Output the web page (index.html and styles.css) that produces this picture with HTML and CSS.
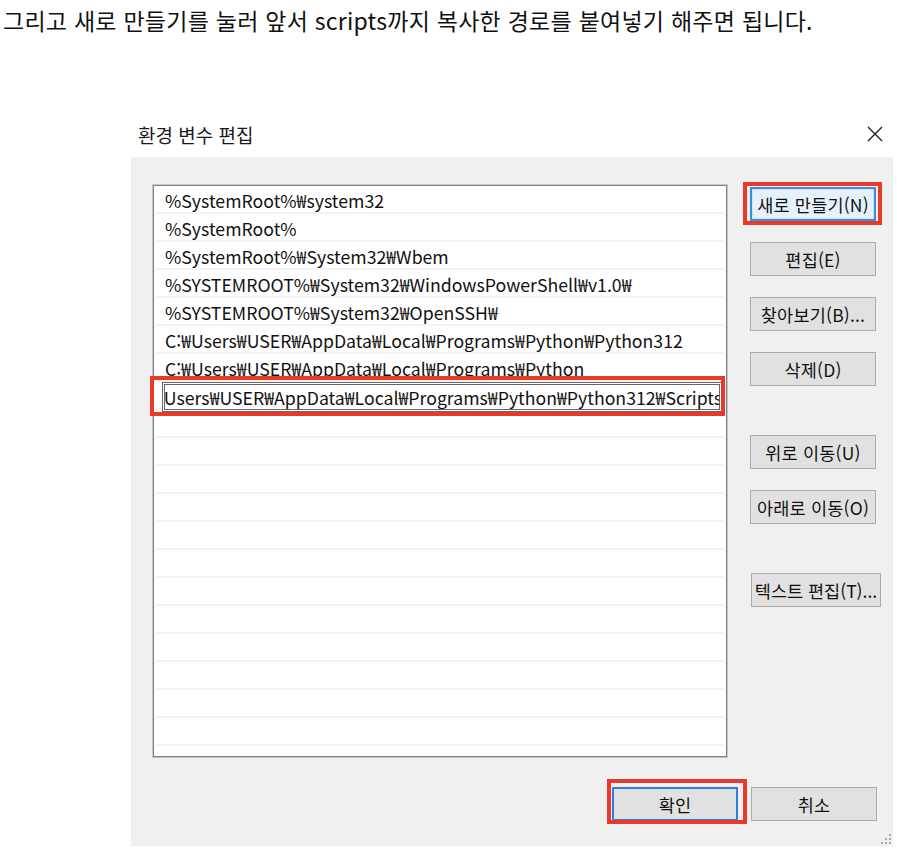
FILE: index.html
```html
<!DOCTYPE html>
<html lang="ko">
<head>
    <meta charset="UTF-8">
    <meta name="viewport" content="width=device-width, initial-scale=1.0">
    <title>환경 변수 편집</title>
    <link rel="stylesheet" href="styles.css">
</head>
<body>
<p class="intro">그리고 새로 만들기를 눌러 앞서 scripts까지 복사한 경로를 붙여넣기 해주면 됩니다.</p>

<div class="dialog">
    <div class="titlebar">
        <span class="title">환경 변수 편집</span>
        <span class="close">
            <svg width="16" height="16" viewBox="0 0 16 16">
                <path d="M1 1 L15 15 M15 1 L1 15" stroke="#1e1e1e" stroke-width="1.4" fill="none"/>
            </svg>
        </span>
    </div>

    <div class="dialog-body">
        <div class="main">
            <ul class="path-list">
                <li>%SystemRoot%₩system32</li>
                <li>%SystemRoot%</li>
                <li>%SystemRoot%₩System32₩Wbem</li>
                <li>%SYSTEMROOT%₩System32₩WindowsPowerShell₩v1.0₩</li>
                <li>%SYSTEMROOT%₩System32₩OpenSSH₩</li>
                <li>C:₩Users₩USER₩AppData₩Local₩Programs₩Python₩Python312</li>
                <li>C:₩Users₩USER₩AppData₩Local₩Programs₩Python</li>
                <li class="editing">
                    <div class="edit"><span class="edit-text">₩Users₩USER₩AppData₩Local₩Programs₩Python₩Python312₩Scripts</span></div>
                    <span class="mark mark-row"></span>
                </li>
                <li></li>
                <li></li>
                <li></li>
                <li></li>
                <li></li>
                <li></li>
                <li></li>
                <li></li>
                <li></li>
                <li></li>
                <li></li>
                <li></li>
                <li class="last"></li>
            </ul>

            <div class="side">
                <button class="btn focused">새로 만들기(N)<span class="mark mark-new"></span></button>
                <button class="btn">편집(E)</button>
                <button class="btn">찾아보기(B)...</button>
                <button class="btn">삭제(D)</button>
                <button class="btn spaced">위로 이동(U)</button>
                <button class="btn">아래로 이동(O)</button>
                <button class="btn spaced wide">텍스트 편집(T)...</button>
            </div>
        </div>

        <div class="footer">
            <button class="btn default">확인<span class="mark mark-ok"></span></button>
            <button class="btn">취소</button>
        </div>

        <svg class="grip" width="12" height="12" viewBox="0 0 12 12">
            <rect x="9" y="1" width="2" height="2" fill="#a8a8a8"/>
            <rect x="5" y="5" width="2" height="2" fill="#a8a8a8"/>
            <rect x="9" y="5" width="2" height="2" fill="#a8a8a8"/>
            <rect x="1" y="9" width="2" height="2" fill="#a8a8a8"/>
            <rect x="5" y="9" width="2" height="2" fill="#a8a8a8"/>
            <rect x="9" y="9" width="2" height="2" fill="#a8a8a8"/>
        </svg>
    </div>
</div>
</body>
</html>
```

FILE: styles.css
```css
/* Page */
body {
    margin: 0;
    padding: 0;
    background-color: #fff;
    font-family: "Noto Sans CJK KR", "Noto Sans", sans-serif;
    color: #000;
}

.intro {
    margin: 0;
    padding: 5px 0 0 3px;
    font-size: 23px;
    line-height: 30px;
    letter-spacing: 0.25px;
    color: #111;
}

/* Dialog window */
.dialog {
    margin: 75px 0 0 131px;
    width: 762px;
}

.titlebar {
    height: 47px;
    display: flex;
    align-items: center;
    justify-content: space-between;
    padding: 0 10px 0 7px;
}

.title {
    font-size: 19px;
    color: #1a1a1a;
    padding-top: 2px;
}

.close {
    display: flex;
    padding-top: 1px;
}

.dialog-body {
    position: relative;
    background-color: #f0f0f0;
    height: 689px;
    padding: 28px 0 0 22px;
    box-sizing: border-box;
}

.main {
    display: flex;
    align-items: flex-start;
}

/* Path list */
.path-list {
    list-style: none;
    margin: 0;
    padding: 0;
    width: 574px;
    height: 572px;
    box-sizing: border-box;
    background-color: #fff;
    border: 1px solid #7f8288;
    box-shadow: 0 0 0 1px #c4c6ca;
}

.path-list li {
    position: relative;
    height: 28px;
    box-sizing: border-box;
    border-bottom: 2px solid #f3f3f3;
    margin: 0 1px;
    padding-left: 10px;
    font-size: 17.7px;
    line-height: 28px;
    color: #111;
    white-space: nowrap;
}

.path-list li.last {
    height: 10px;
    border-bottom: none;
}

.path-list li.editing {
    padding-left: 0;
}

.edit {
    margin: 0 3px 0 7px;
    height: 30px;
    box-sizing: border-box;
    border: 3px double #666;
    background-color: #fff;
    overflow: hidden;
    line-height: 24px;
}

.edit-text {
    display: inline-block;
    margin-left: -11px;
}

/* Red annotation boxes */
.mark {
    position: absolute;
    border: 4px solid #e8392b;
    pointer-events: none;
}

.mark-row {
    left: -5px;
    top: -6px;
    right: 0;
    bottom: -8px;
}

.mark-new {
    left: -9px;
    top: -7px;
    right: -8px;
    bottom: -6px;
}

.mark-ok {
    left: -7px;
    top: -10px;
    right: -11px;
    bottom: -5px;
}

/* Buttons */
.side {
    display: flex;
    flex-direction: column;
    gap: 21px;
    margin-left: 23px;
    padding-top: 2px;
}

.btn {
    position: relative;
    width: 126px;
    height: 34px;
    padding: 0;
    font-family: inherit;
    font-size: 17.5px;
    letter-spacing: 0.2px;
    color: #111;
    background-color: #e1e1e1;
    border: 1px solid #adadad;
    white-space: nowrap;
}

.btn.spaced {
    margin-top: 28px;
}

.btn.wide {
    width: 130px;
    margin-left: 1px;
    letter-spacing: 0;
}

.btn.focused {
    background-color: #e5f1fb;
    border: 2px solid #3c8ce0;
    box-shadow: inset 0 0 0 1px #cfe3f7;
}

.btn.default {
    border: 2px solid #2f7fe0;
}

.footer {
    display: flex;
    gap: 13px;
    margin: 30px 0 0 459px;
}

.grip {
    position: absolute;
    right: 1px;
    bottom: 1px;
}
```
